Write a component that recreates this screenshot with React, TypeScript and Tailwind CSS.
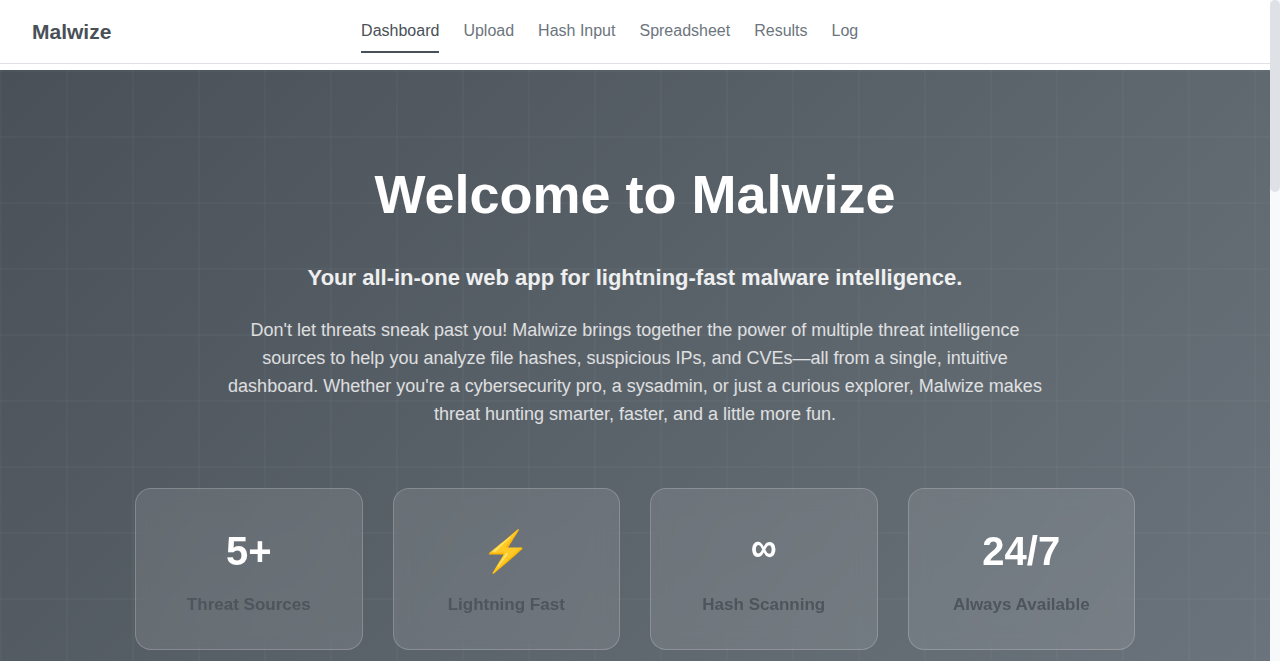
const links = ["Dashboard", "Upload", "Hash Input", "Spreadsheet", "Results", "Log"];

const stats = [
  { value: "5+", label: "Threat Sources" },
  { value: "⚡", label: "Lightning Fast" },
  { value: "∞", label: "Hash Scanning", mono: true },
  { value: "24/7", label: "Always Available" },
];

function Header() {
  return (
    <header className="flex h-16 items-center justify-between border-b border-[#dee2e6] bg-white px-8">
      <a href="#home" className="text-[21px] leading-8 font-bold text-[#495057]">
        Malwize
      </a>
      <nav aria-label="Main" className="flex gap-6">
        {links.map((name, i) => (
          <a
            key={name}
            href={"#" + name.toLowerCase().replace(" ", "-")}
            aria-current={i === 0 ? "page" : undefined}
            className={
              i === 0
                ? "border-b-2 border-[#495057] py-2 text-base text-[#495057]"
                : "border-b-2 border-transparent py-2 text-base text-[#6c757d]"
            }
          >
            {name}
          </a>
        ))}
      </nav>
      <div className="w-[130px]" />
    </header>
  );
}

function Hero() {
  return (
    <section className="mt-1.5 bg-[linear-gradient(135deg,#495057_0%,#6c757d_100%)] text-center text-white">
      <div className="bg-[linear-gradient(to_right,rgba(255,255,255,0.025)_2px,transparent_2px),linear-gradient(to_bottom,rgba(255,255,255,0.025)_2px,transparent_2px)] bg-size-[66px_66px] px-8 py-[92px]">
        <h1 className="text-[54px] leading-16 font-bold">Welcome to Malwize</h1>
        <p className="mt-8 text-[22px] leading-10 font-bold text-white/90">
          Your all-in-one web app for lightning-fast malware intelligence.
        </p>
        <p className="mx-auto mt-[18px] max-w-[824px] text-[18px] leading-7 text-white/80">
          Don't let threats sneak past you! Malwize brings together the power of multiple threat
          intelligence sources to help you analyze file hashes, suspicious IPs, and CVEs—all from a
          single, intuitive dashboard. Whether you're a cybersecurity pro, a sysadmin, or just a
          curious explorer, Malwize makes threat hunting smarter, faster, and a little more fun.
        </p>
        <div className="mx-auto mt-15 grid max-w-[1000px] grid-cols-4 gap-[30px]">
          {stats.map((s) => (
            <div
              key={s.label}
              className="rounded-2xl border border-white/20 bg-white/10 px-4 py-8 backdrop-blur-[10px]"
            >
              <div
                className={
                  s.mono
                    ? "h-[60px] font-['Liberation_Mono',monospace] text-[40px] leading-[60px] font-bold"
                    : "h-[60px] text-[40px] leading-[60px] font-bold"
                }
              >
                {s.value}
              </div>
              <div className="mt-3 text-[17px] leading-6 font-bold text-[#4e555c]">{s.label}</div>
            </div>
          ))}
        </div>
      </div>
    </section>
  );
}

export default function App() {
  return (
    <div className="flex h-screen overflow-hidden bg-white font-['Liberation_Sans',Arial,sans-serif]">
      <main className="min-w-0 flex-1 overflow-hidden">
        <Header />
        <Hero />
      </main>
      <div aria-hidden="true" className="w-2.5 shrink-0 bg-[#f8f9fa]">
        <div className="h-48 rounded-full bg-[#dee2e6]" />
      </div>
    </div>
  );
}
